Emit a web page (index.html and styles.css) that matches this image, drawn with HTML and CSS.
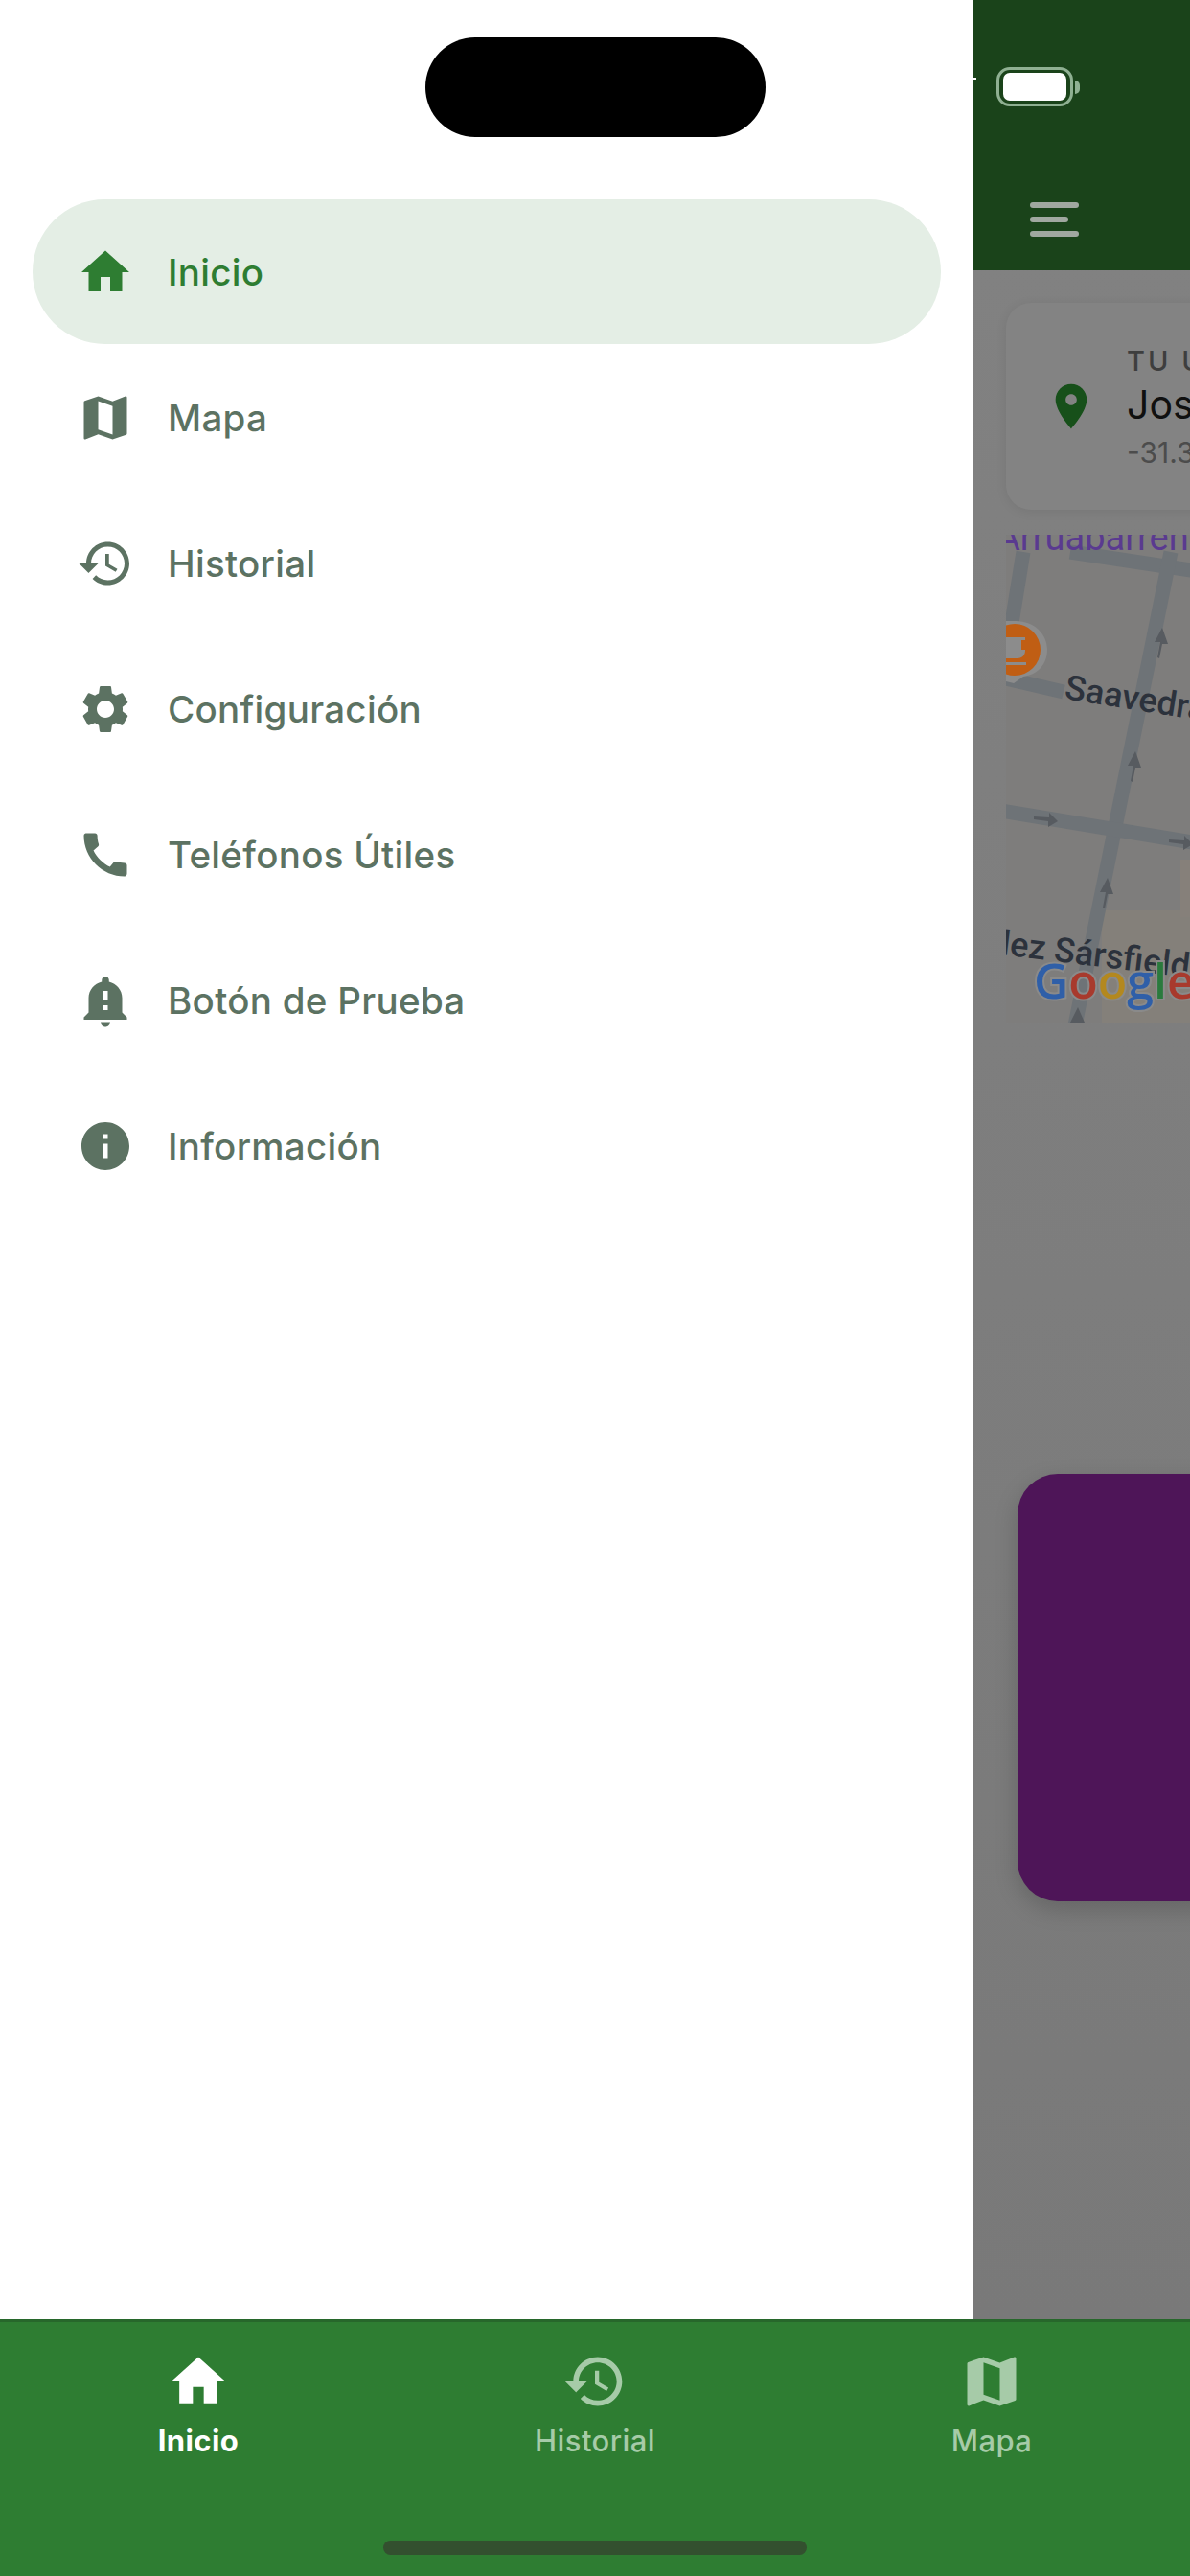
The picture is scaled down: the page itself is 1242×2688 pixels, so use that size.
FILE: index.html
```html
<!DOCTYPE html>
<html lang="es">
<head>
<meta charset="UTF-8">
<meta name="viewport" content="width=device-width, initial-scale=1.0">
<title>Inicio</title>
<link rel="stylesheet" href="styles.css">
</head>
<body>
    <svg class="icon-defs" width="0" height="0">
        <symbol id="i-home" viewBox="0 0 24 24"><path d="M10 20v-6h4v6h5v-8h3L12 3 2 12h3v8z"/></symbol>
        <symbol id="i-map" viewBox="0 0 24 24"><path d="M20.5 3l-.16.03L15 5.1 9 3 3.36 4.9c-.21.07-.36.25-.36.48V20.5c0 .28.22.5.5.5l.16-.03L9 18.9l6 2.1 5.64-1.9c.21-.07.36-.25.36-.48V3.5c0-.28-.22-.5-.5-.5zM15 19l-6-2.11V5l6 2.11V19z"/></symbol>
        <symbol id="i-history" viewBox="0 0 24 24"><path d="M13 3c-4.97 0-9 4.03-9 9H1l3.89 3.89.07.14L9 12H6c0-3.87 3.13-7 7-7s7 3.13 7 7-3.13 7-7 7c-1.93 0-3.68-.79-4.94-2.06l-1.42 1.42C8.27 19.99 10.51 21 13 21c4.97 0 9-4.03 9-9s-4.03-9-9-9zm-1 5v5l4.28 2.54.72-1.21-3.5-2.08V8H12z"/></symbol>
        <symbol id="i-settings" viewBox="0 0 24 24"><path d="M19.14 12.94c.04-.3.06-.61.06-.94 0-.32-.02-.64-.07-.94l2.03-1.58c.18-.14.23-.41.12-.61l-1.92-3.32c-.12-.22-.37-.29-.59-.22l-2.39.96c-.5-.38-1.03-.7-1.62-.94l-.36-2.54c-.04-.24-.24-.41-.48-.41h-3.84c-.24 0-.43.17-.47.41l-.36 2.54c-.59.24-1.13.57-1.62.94l-2.39-.96c-.22-.08-.47 0-.59.22L2.74 8.87c-.12.21-.08.47.12.61l2.03 1.58c-.05.3-.09.63-.09.94s.02.64.07.94l-2.03 1.58c-.18.14-.23.41-.12.61l1.92 3.32c.12.22.37.29.59.22l2.39-.96c.5.38 1.03.7 1.62.94l.36 2.54c.05.24.24.41.48.41h3.84c.24 0 .44-.17.47-.41l.36-2.54c.59-.24 1.13-.56 1.62-.94l2.39.96c.22.08.47 0 .59-.22l1.92-3.32c.12-.22.07-.47-.12-.61l-2.01-1.58zM12 15.6c-1.98 0-3.6-1.62-3.6-3.6s1.62-3.6 3.6-3.6 3.6 1.62 3.6 3.6-1.62 3.6-3.6 3.6z"/></symbol>
        <symbol id="i-phone" viewBox="0 0 24 24"><path d="M20.01 15.38c-1.23 0-2.42-.2-3.53-.56-.35-.12-.74-.03-1.01.24l-1.57 1.97c-2.83-1.35-5.48-3.9-6.89-6.83l1.95-1.66c.27-.28.35-.67.24-1.02-.37-1.11-.56-2.3-.56-3.53 0-.54-.45-.99-.99-.99H4.19C3.65 3 3 3.24 3 3.99 3 13.28 10.73 21 20.01 21c.71 0 .99-.63.99-1.18v-3.45c0-.54-.45-.99-.99-.99z"/></symbol>
        <symbol id="i-bell" viewBox="0 0 24 24"><path d="M12 23c1.1 0 1.99-.89 1.99-1.99h-3.98C10.01 22.11 10.9 23 12 23zm7-6v-6c0-3.35-2.36-6.15-5.5-6.83V3.5c0-.83-.67-1.5-1.5-1.5s-1.5.67-1.5 1.5v.67C7.36 4.85 5 7.65 5 11v6l-2 2v1h18v-1l-2-2zm-6-1h-2v-2h2v2zm0-4h-2V8h2v4z"/></symbol>
        <symbol id="i-info" viewBox="0 0 24 24"><path d="M12 2C6.48 2 2 6.48 2 12s4.48 10 10 10 10-4.48 10-10S17.52 2 12 2zm1 15h-2v-6h2v6zm0-8h-2V7h2v2z"/></symbol>
        <symbol id="i-pin" viewBox="0 0 24 24"><path d="M12 2C8.13 2 5 5.13 5 9c0 5.25 7 13 7 13s7-7.75 7-13c0-3.87-3.13-7-7-7zm0 9.5c-1.38 0-2.5-1.12-2.5-2.5s1.12-2.5 2.5-2.5 2.5 1.12 2.5 2.5-1.12 2.5-2.5 2.5z"/></symbol>
    </svg>

    <div class="notch"></div>

    <div class="main">
        <nav class="drawer">
            <a class="drawer-item active"><svg class="drawer-icon"><use href="#i-home"/></svg><span>Inicio</span></a>
            <a class="drawer-item"><svg class="drawer-icon"><use href="#i-map"/></svg><span>Mapa</span></a>
            <a class="drawer-item"><svg class="drawer-icon"><use href="#i-history"/></svg><span>Historial</span></a>
            <a class="drawer-item"><svg class="drawer-icon"><use href="#i-settings"/></svg><span>Configuración</span></a>
            <a class="drawer-item"><svg class="drawer-icon"><use href="#i-phone"/></svg><span>Teléfonos Útiles</span></a>
            <a class="drawer-item"><svg class="drawer-icon"><use href="#i-bell"/></svg><span>Botón de Prueba</span></a>
            <a class="drawer-item"><svg class="drawer-icon"><use href="#i-info"/></svg><span>Información</span></a>
        </nav>

        <div class="behind">
            <header class="appbar">
                <div class="battery"><div class="battery-body"><div class="battery-fill"></div></div><div class="battery-cap"></div></div>
                <div class="hamburger"><i></i><i class="short"></i><i></i></div>
            </header>

            <div class="location-card">
                <svg class="pin"><use href="#i-pin"/></svg>
                <div class="location-text">
                    <div class="location-label">TU U</div>
                    <div class="location-name">Jos</div>
                    <div class="location-coords">-31.3</div>
                </div>
            </div>

            <!-- map tile, coordinates are page pixels -->
            <svg class="map" viewBox="1050 558 192 509">
                <rect x="1050" y="558" width="192" height="509" fill="#7e7d7c"/>
                <path d="M1150 950h100v120h-100z" fill="#84807a"/>
                <path d="M1232 897h20v60h-20z" fill="#86807a"/>
                <g class="road">
                    <path d="M1068 576L1056 650"/>
                    <path d="M1117 576L1250 596"/>
                    <path d="M1222 576L1122 1070"/>
                    <path d="M1045 846L1250 880"/>
                    <path d="M1050 708L1110 722"/>
                </g>
                <g class="arrow">
                    <path d="M1208 686l3-16h-6l8-15 6 17h-6l-3 15z"/>
                    <path d="M1180 815l3-16h-6l8-15 6 17h-6l-3 15z"/>
                    <path d="M1151 947l3-16h-6l8-15 6 17h-6l-3 15z"/>
                    <path d="M1079 852l16 1v-5l9 9-10 6v-6l-15-2z"/>
                    <path d="M1220 876l16 1v-5l9 9-10 6v-6l-15-2z"/>
                    <path d="M1117 1067l8-16 7 16z"/>
                </g>
                <path d="M1046 648h14c20 0 33 14 33 30 0 15-10 26-25 28l-10 7-12-3z" fill="#8c8c8c"/>
                <circle cx="1059" cy="678" r="27" fill="#c05e14"/>
                <path d="M1046 665h24v14c0 5-4 8-8 8h-16z" fill="#8c8c8c"/>
                <rect x="1066" y="668" width="5" height="10" fill="#c05e14"/>
                <rect x="1046" y="691" width="25" height="3" fill="#8c8c8c"/>
                <text class="map-purple" x="1040" y="574">Arruabarrena</text>
                <text class="map-street" transform="translate(1110 729) rotate(9)">Saavedra</text>
                <text class="map-street" transform="translate(1044 996) rotate(7)">lez Sársfield</text>
                <text class="google" x="1079" y="1042"><tspan fill="#2f5fa8">G</tspan><tspan fill="#a83a2d">o</tspan><tspan fill="#b3881f">o</tspan><tspan fill="#2f5fa8">g</tspan><tspan fill="#2a7a3d">l</tspan><tspan fill="#a83a2d">e</tspan></text>
            </svg>

            <div class="promo-card"></div>
        </div>
    </div>

    <nav class="bottom-nav">
        <div class="tab selected"><svg class="tab-icon"><use href="#i-home"/></svg><span>Inicio</span></div>
        <div class="tab"><svg class="tab-icon"><use href="#i-history"/></svg><span>Historial</span></div>
        <div class="tab"><svg class="tab-icon"><use href="#i-map"/></svg><span>Mapa</span></div>
        <div class="home-bar"></div>
    </nav>
</body>
</html>
```

FILE: styles.css
```css
* {
    box-sizing: border-box;
}
html, body {
    margin: 0;
    padding: 0;
}
body {
    position: relative;
    width: 1242px;
    height: 2688px;
    overflow: hidden;
    display: flex;
    flex-direction: column;
    font-family: Inter, "Liberation Sans", sans-serif;
    background: #fff;
}
.icon-defs {
    position: absolute;
}
.notch {
    position: absolute;
    left: 444px;
    top: 39px;
    width: 355px;
    height: 104px;
    border-radius: 52px;
    background: #000;
}
.main {
    display: flex;
    height: 2420px;
}

/* drawer */
.drawer {
    width: 1016px;
    flex: none;
    padding: 208px 34px 0;
    background: #fff;
    display: flex;
    flex-direction: column;
}
.drawer-item {
    height: 152px;
    padding-left: 46px;
    display: flex;
    align-items: center;
    gap: 35px;
    font-size: 38.5px;
    font-weight: 500;
    letter-spacing: 0.3px;
    color: #5c7262;
    fill: #5c7262;
    border-radius: 76px;
}
.drawer-item.active {
    height: 151px;
    margin-bottom: 1px;
    background: #e4eee5;
    color: #2e7d32;
    fill: #2e7d32;
}
.drawer-icon {
    width: 60px;
    height: 60px;
    flex: none;
}

/* what is left of the page behind the drawer */
.behind {
    flex: 1;
    min-width: 0;
    overflow: hidden;
    background: linear-gradient(#828282, #797979);
}
.appbar {
    position: relative;
    height: 282px;
    padding: 70px 0 0 24px;
    background: #1a431a;
}
.appbar::before {
    content: "";
    position: absolute;
    left: 0;
    top: 81px;
    width: 3px;
    height: 2px;
    background: #fff;
}
.battery {
    display: flex;
    align-items: center;
    gap: 2px;
}
.battery-body {
    width: 80px;
    height: 41px;
    padding: 3px 4px;
    border: 3px solid #8fb092;
    border-radius: 14px;
}
.battery-fill {
    height: 100%;
    background: #fff;
    border-radius: 7px;
}
.battery-cap {
    width: 5px;
    height: 14px;
    background: #8fb092;
    border-radius: 0 5px 5px 0;
}
.hamburger {
    margin: 100px 0 0 35px;
    width: 51px;
    display: flex;
    flex-direction: column;
    gap: 9px;
}
.hamburger i {
    display: block;
    height: 6px;
    border-radius: 3px;
    background: #a0a8a0;
}
.hamburger .short {
    width: 40px;
}
.location-card {
    margin: 34px 0 0 34px;
    width: 500px;
    height: 216px;
    padding-left: 40px;
    display: flex;
    align-items: center;
    gap: 30px;
    background: #838383;
    border-radius: 26px;
    box-shadow: 0 2px 12px rgba(0,0,0,0.08);
}
.pin {
    width: 56px;
    height: 56px;
    flex: none;
    fill: #17501a;
}
.location-label {
    font-size: 29px;
    font-weight: 500;
    letter-spacing: 3px;
    color: #3e3e3e;
}
.location-name {
    font-size: 41px;
    font-weight: 400;
    color: #101010;
    margin: 3px 0 7px;
}
.location-coords {
    font-size: 30px;
    color: #4c4c4c;
}
.map {
    display: block;
    width: 192px;
    height: 509px;
    margin: 26px 0 0 34px;
}
.road path {
    fill: none;
    stroke: #6e7377;
    stroke-width: 15;
}
.arrow path {
    fill: #575b60;
}
.map-purple {
    font-family: Roboto, sans-serif;
    font-size: 38px;
    fill: #5a3a90;
}
.map-street {
    font-family: Roboto, sans-serif;
    font-size: 36px;
    font-weight: 500;
    fill: #2c323c;
}
.google {
    font-family: "Open Sans", sans-serif;
    font-size: 50px;
    font-weight: 600;
    stroke: #8a8a8a;
    stroke-width: 4px;
    paint-order: stroke;
}
.promo-card {
    margin: 471px 0 0 46px;
    width: 500px;
    height: 446px;
    background: #4e1558;
    border-radius: 42px;
    box-shadow: 0 8px 24px rgba(0,0,0,0.18);
}

/* bottom tabs */
.bottom-nav {
    position: relative;
    flex: 1;
    display: flex;
    background: #2e7d32;
    border-top: 3px solid #27672b;
}
.tab {
    flex: 1;
    padding-top: 28px;
    display: flex;
    flex-direction: column;
    align-items: center;
    gap: 9px;
    font-size: 31px;
    font-weight: 500;
    letter-spacing: 0.4px;
    color: #a6cba8;
    fill: #a6cba8;
}
.tab.selected {
    color: #fff;
    fill: #fff;
    font-weight: 700;
}
.tab-icon {
    width: 68px;
    height: 68px;
}
.home-bar {
    position: absolute;
    left: 400px;
    top: 228px;
    width: 442px;
    height: 15px;
    border-radius: 8px;
    background: #33502f;
}
```
